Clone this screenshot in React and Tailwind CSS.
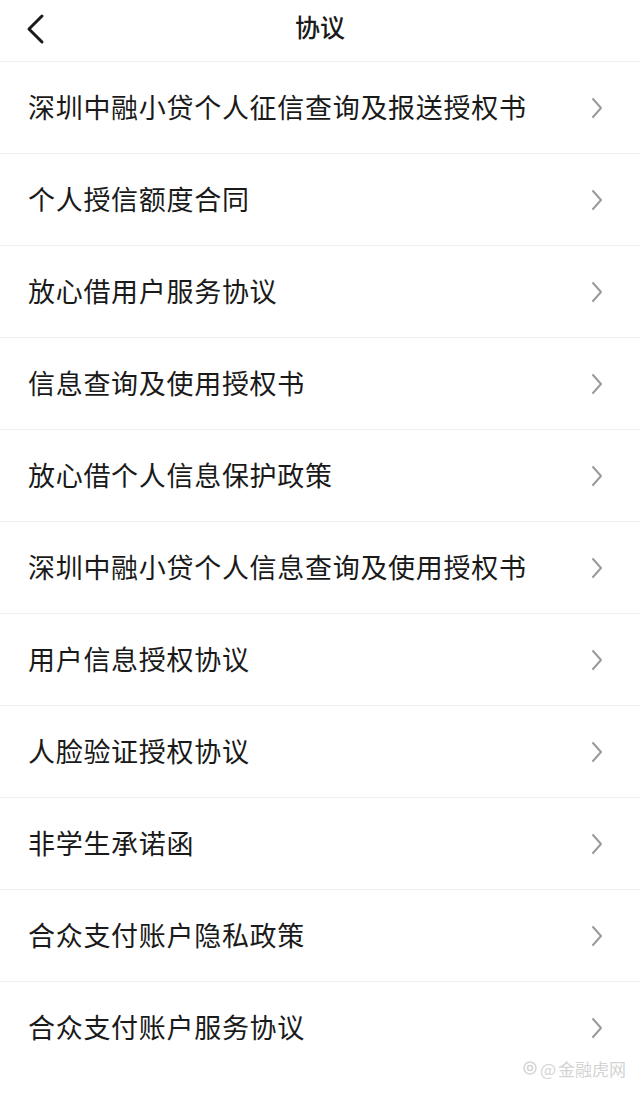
const items = [
  "深圳中融小贷个人征信查询及报送授权书",
  "个人授信额度合同",
  "放心借用户服务协议",
  "信息查询及使用授权书",
  "放心借个人信息保护政策",
  "深圳中融小贷个人信息查询及使用授权书",
  "用户信息授权协议",
  "人脸验证授权协议",
  "非学生承诺函",
  "合众支付账户隐私政策",
  "合众支付账户服务协议",
];

export default function App() {
  return (
    <div
      className="relative w-[640px] h-[1095px] bg-white text-[#1a1a1a] overflow-hidden"
      style={{ fontFamily: '"Noto Sans CJK SC", "Noto Sans", sans-serif' }}
    >
      {/* Header */}
      <div className="relative h-[62px] flex items-center justify-center border-b border-[#f0f0f0]">
        <svg
          className="absolute left-[24px] top-[13px]"
          width="22"
          height="32"
          viewBox="0 0 22 32"
          fill="none"
          stroke="#1a1a1a"
          strokeWidth="3"
          strokeLinecap="round"
          strokeLinejoin="round"
        >
          <path d="M18 3 L5 16 L18 29" />
        </svg>
        <h1 className="text-[25px] font-medium -mt-[7px]">协议</h1>
      </div>

      {/* List */}
      <div>
        {items.map((t, i) => (
          <div
            key={i}
            className={`h-[92px] flex items-center justify-between pl-[28px] pr-[36px] ${
              i < items.length - 1 ? "border-b border-[#f0f0f0]" : ""
            }`}
          >
            <span className="text-[27px] leading-none tracking-[0.7px] -mt-[3px]">{t}</span>
            <svg
              width="14"
              height="22"
              viewBox="0 0 14 22"
              fill="none"
              stroke="#9a9a9a"
              strokeWidth="2"
              strokeLinecap="round"
              strokeLinejoin="round"
            >
              <path d="M3 2 L11 11 L3 20" />
            </svg>
          </div>
        ))}
      </div>

      {/* Watermark */}
      <div className="absolute right-[14px] bottom-[14px] flex items-center gap-[2px] text-[17px] text-[#d4d4d4]">
        <svg width="16" height="16" viewBox="0 0 16 16" fill="none" stroke="#d4d4d4" strokeWidth="1.5">
          <circle cx="8" cy="8" r="6" />
          <circle cx="8" cy="8" r="2.5" />
        </svg>
        <span>@</span>
        <span>金融虎网</span>
      </div>
    </div>
  );
}
